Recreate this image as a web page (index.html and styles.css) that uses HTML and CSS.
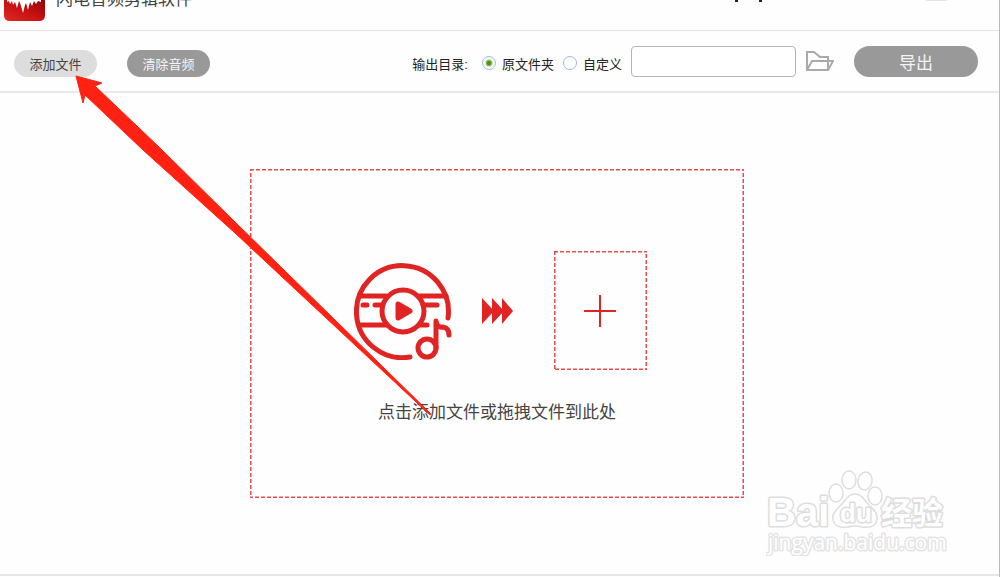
FILE: index.html
```html
<!DOCTYPE html>
<html lang="zh-CN">
<head>
  <meta charset="UTF-8" />
  <meta name="viewport" content="width=device-width, initial-scale=1.0"/>
  <title>闪电音频剪辑软件</title>

  <link rel="stylesheet" href="styles.css">
</head>

<body>
  <header class="titlebar">
    <svg class="logo" viewBox="0 0 41 21" aria-hidden="true">
      <defs>
        <linearGradient id="logo-red" x1="0" y1="1" x2="1" y2="0">
          <stop offset="0" stop-color="#e32a22"/>
          <stop offset="0.55" stop-color="#c40f10"/>
          <stop offset="1" stop-color="#8e0505"/>
        </linearGradient>
      </defs>
      <path d="M0 0H41V15Q41 21 35 21H6Q0 21 0 15Z" fill="url(#logo-red)"/>
      <path d="M3 2L5 1 6 4 8 1 9 5 11 2 13 8 15 1 16 3 17 6 19 13 21 5 22 3 24 10 26 2 28 6 30 1 32 4 34 1 37 2V0H3Z" fill="#fff"/>
    </svg>
    <h1>闪电音频剪辑软件</h1>
    <svg class="window-tools" viewBox="0 0 214 3" aria-hidden="true">
      <path d="M1 0H4V2H1ZM25 0H28V2H25Z" fill="#222"/>
      <path d="M192 0H213" stroke="#ccc"/>
    </svg>
  </header>

  <form class="toolbar">
    <div class="files">
      <button type="button" class="pill light">添加文件</button>
      <button type="button" class="pill">清除音频</button>
    </div>

    <div class="output">
      <div class="choices">
        <span class="output-label">输出目录:</span>
        <label><input type="radio" name="dir" value="source" checked />原文件夹</label>
        <label><input type="radio" name="dir" value="custom" />自定义</label>
      </div>
      <input type="text" name="path" class="path" aria-label="输出目录" />
      <button type="button" class="browse" aria-label="打开文件夹">
        <svg viewBox="0 0 28 20">
          <path d="M1 19V1H8L14 6H22V19M1 19L6 10H27L22 19Z"/>
        </svg>
      </button>
      <button type="submit" class="pill export">导出</button>
    </div>
  </form>

  <main>
    <section class="drop">
      <svg class="dashes" aria-hidden="true"><rect width="100%" height="100%"/></svg>
      <div class="drop-row">
        <svg class="disc" viewBox="0 0 98 98" aria-hidden="true">
          <path d="M56 95A46 46 0 1 1 94 56"/>
          <path d="M6 34H32M66 34H92M6 63H32M66 63H73"/>
          <path d="M9 43H13M21 43H28M69 43H83"/>
          <circle cx="49" cy="49" r="21"/>
          <path class="solid" d="M44 42V56L56 49Z"/>
          <circle cx="73" cy="86" r="9"/>
          <path d="M82 86V59Q83 66 89 65Q95 66 95 73"/>
        </svg>
        <svg class="steps" viewBox="0 0 31 26" aria-hidden="true">
          <path d="M0 0L12 13 0 26ZM10 0L22 13 10 26ZM20 0L31 13 20 26Z"/>
        </svg>
        <button type="button" class="add" aria-label="添加文件">
          <svg class="dashes"><rect width="100%" height="100%"/></svg>
          <svg class="plus" viewBox="0 0 32 32"><path d="M16 0V32M0 16H32"/></svg>
        </button>
      </div>
      <p>点击添加文件或拖拽文件到此处</p>
    </section>

    <!-- watermark -->
    <svg class="watermark" viewBox="0 0 184 90">
      <g class="paw">
        <ellipse cx="70" cy="27" rx="7" ry="9"/>
        <ellipse cx="83" cy="14" rx="7" ry="9"/>
        <ellipse cx="99" cy="15" rx="7" ry="9" transform="rotate(12 99 15)"/>
        <ellipse cx="109" cy="30" rx="7" ry="9"/>
        <path d="M89 28C96 28 98 34 103 39C109 44 112 48 111 53C110 61 103 62 96 61Q89 59 82 61C75 62 68 61 67 53C66 48 70 44 75 39C80 34 82 28 89 28Z"/>
      </g>
      <text class="brand" x="1" y="60">Bai</text>
      <text class="du" x="74" y="56">du</text>
      <text class="cjk" x="115" y="58">经验</text>
      <text class="site" x="2" y="84">jingyan.baidu.com</text>
    </svg>
  </main>

  <footer></footer>

  <svg class="pointer" viewBox="0 0 360 344" aria-hidden="true">
    <path d="M2 2L28 9 21 12 86 74 161 148 357 340 356 341 161 159 69 76 11 21 9 29Z"/>
  </svg>
</body>
</html>
```

FILE: styles.css
```css
* {
  box-sizing: border-box;
}

body {
  display: flex;
  flex-direction: column;
  min-height: 100vh;
  margin: 0;
  font-family: "Liberation Sans", "Noto Sans CJK SC", sans-serif;
  font-size: 13px;
  background: #fefefe;
  color: #222;
  border-right: 1px solid #bbb;
}

.titlebar {
  display: flex;
  align-items: flex-start;
  height: 31px;
  padding: 0 51px 0 4px;
  overflow: hidden;
  border-bottom: 1px solid #e4e4e4;
}

.logo {
  width: 41px;
  height: 21px;
}

h1 {
  margin: -12px 0 0 11px;
  font-size: 17px;
  font-weight: normal;
  line-height: 24px;
  color: #444;
}

.window-tools {
  width: 214px;
  height: 3px;
  margin-left: auto;
}

.toolbar {
  display: flex;
  align-items: center;
  height: 62px;
  padding: 0 21px 0 14px;
  border-bottom: 2px solid #eaeaea;
}

button {
  padding: 0;
  border: none;
  background: none;
  font-family: inherit;
  cursor: pointer;
}

.files {
  display: flex;
  gap: 30px;
  padding-top: 4px;
}

.pill {
  width: 83px;
  height: 27px;
  border-radius: 16px;
  background: #999;
  color: #f4f4f4;
  font-size: 13px;
}

.pill.light {
  background: #ddd;
  color: #444;
}

.output {
  display: flex;
  align-items: center;
  margin-left: auto;
}

.choices {
  display: flex;
  align-items: center;
  padding-top: 4px;
}

.output-label {
  margin-right: 14px;
}

label {
  display: flex;
  align-items: center;
  margin-right: 9px;
}

input[type="radio"] {
  appearance: none;
  width: 14px;
  height: 14px;
  margin: 0 6px 0 0;
  border: 1px solid #9dbcd6;
  border-radius: 50%;
  background: #fff;
}

input[type="radio"]:checked {
  background: radial-gradient(circle, #4e9a06 0, #4e9a06 2px, #fff 4px);
}

.path {
  width: 165px;
  height: 31px;
  padding: 0 8px;
  border: 1px solid #b4b4b4;
  border-radius: 4px;
  background: #fff;
}

.browse {
  width: 28px;
  height: 20px;
  margin: 0 20px 0 10px;
}

.browse svg {
  display: block;
  fill: none;
  stroke: #aaa;
  stroke-width: 2;
}

.pill.export {
  width: 124px;
  height: 31px;
  font-size: 17px;
}

main {
  position: relative;
  display: flex;
  flex: 1;
  justify-content: center;
  align-items: flex-start;
  padding: 76px 6px 76px 0;
}

.drop {
  position: relative;
  width: 50%;
  max-width: 494px;
  padding: 82px 97px 72px 104px;
}

.dashes {
  position: absolute;
  inset: 0;
  width: 100%;
  height: 100%;
  fill: none;
  stroke: #e84c4c;
  stroke-width: 3;
  stroke-dasharray: 4 2;
}

.drop-row {
  display: flex;
  align-items: center;
  justify-content: space-between;
}

.disc {
  width: 98px;
  height: 98px;
  fill: none;
  stroke: #e02424;
  stroke-width: 5;
  stroke-linecap: round;
  stroke-linejoin: round;
}

.disc .solid {
  fill: #e02424;
}

.steps {
  width: 31px;
  height: 26px;
  margin-left: 18px;
  margin-right: 28px;
  fill: #e02424;
}

.add {
  position: relative;
  display: flex;
  align-items: center;
  justify-content: center;
  width: 93px;
  height: 119px;
}

.plus {
  width: 32px;
  height: 32px;
  stroke: #e02424;
  stroke-width: 2;
}

.drop p {
  margin: 30px -10px 0 -16px;
  font-size: 17px;
  line-height: 26px;
  text-align: center;
  color: #444;
}

.watermark {
  position: absolute;
  right: 49px;
  bottom: 18px;
  width: 184px;
  height: 90px;
  fill: #fff;
  stroke: #ddd;
  stroke-width: 1.5;
}

.watermark text {
  paint-order: stroke;
  stroke-width: 3;
  stroke-linejoin: round;
}

.brand {
  font-size: 40px;
  font-weight: bold;
}

.du {
  font-size: 26px;
  font-weight: bold;
}

.cjk {
  font-size: 31px;
  font-weight: bold;
}

.watermark .site {
  font-family: "Open Sans", sans-serif;
  font-size: 21px;
  stroke: #e4e4e4;
}

footer {
  height: 4px;
  border-top: 2px solid #e6e6e6;
}

/* red arrow pointing at the add button */
.pointer {
  position: absolute;
  left: 74px;
  top: 74px;
  width: 360px;
  height: 344px;
  fill: #ff2213;
  stroke: #ff2213;
  pointer-events: none;
}
```
